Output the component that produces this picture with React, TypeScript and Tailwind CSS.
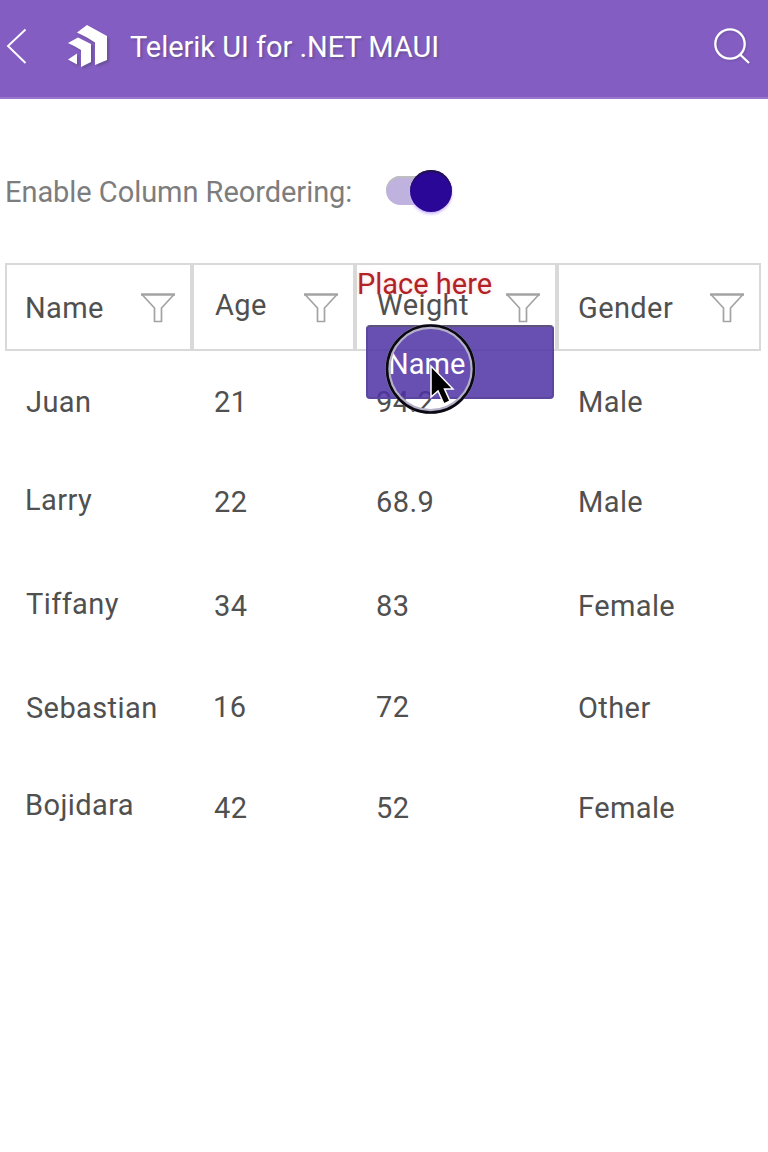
import React from "react";

function Funnel() {
  return (
    <svg className="mt-[27px] h-[34px] w-[38px] shrink-0" viewBox="0 0 38 34" fill="none" stroke="#a3a3a3" strokeWidth="1.7">
      <path d="M3 2.500L15.500 16V29.500H22.500V16L35 2.500" />
      <path d="M2 2.500H36" strokeWidth="2.400" />
    </svg>
  );
}

function Head({ box, text, children }: { box: string; text: string; children: string }) {
  return (
    <div className={`box-border flex h-[88px] justify-between border-2 border-[#d9d9d9] tracking-[0.4px] ${box}`}>
      <span className={`whitespace-nowrap ${text}`}>{children}</span>
      <Funnel />
    </div>
  );
}

function Cell({ className, children }: { className: string; children: string }) {
  return <div className={`whitespace-nowrap ${className}`}>{children}</div>;
}

export default function App() {
  return (
    <main className="relative h-[1152px] w-[768px] overflow-hidden bg-white font-['Roboto',sans-serif] text-[29px] leading-[40px] text-[#505050]">
      <header className="flex h-[99px] items-start border-b-2 border-[#9a76cf] bg-[#845dc2] text-white">
        <svg className="ml-[4px] mt-[26px] h-[40px] w-[24px]" viewBox="0 0 24 40" fill="none" stroke="white" strokeWidth="1.9">
          <path d="M21.500 3.500L4 20L21.500 37" />
        </svg>
        <svg className="ml-[37px] mt-[22px] h-[48px] w-[46px] drop-shadow-[2px_2px_1px_rgba(80,70,110,0.5)]" viewBox="0 0 46 48" fill="white">
          <path d="M12 10.500L22 3L42 14V38L30 43V20.500L22 15.500Z" />
          <path d="M3 21L13 15.500L26 22V40L16 45V28L10 24.500Z" />
          <path d="M3 37.500L12 31.500V42.500Z" />
        </svg>
        <h1 className="ml-[19px] mt-[27px] text-[29px] leading-[40px] tracking-[-0.04px] [text-shadow:2px_2px_2px_rgba(80,70,110,0.45)]">Telerik UI for .NET MAUI</h1>
        <svg className="ml-auto mr-[14px] mt-[26px] h-[42px] w-[42px] drop-shadow-[1px_1px_1px_rgba(80,70,110,0.4)]" viewBox="0 0 42 42" fill="none" stroke="white" strokeWidth="2.3">
          <circle cx="18" cy="18" r="14.700" />
          <path d="M28 28.500L37 37" />
        </svg>
      </header>
      <section className="flex items-start pt-[64px]">
        <span className="ml-[5px] mt-[9px] w-[381px] tracking-[-0.05px] text-[#7d7d7d]">Enable Column Reordering:</span>
        <div className="mt-[13px] flex h-[29px] w-[59px] items-center rounded-full bg-[#bfb2df] shadow-[inset_0_2px_1px_#bebebe]">
          <span className="ml-[24px] h-[42px] w-[42px] shrink-0 rounded-full bg-[#2b0797] shadow-[0_2px_3px_#cbb6ff,inset_0_2px_1px_#211447]" />
        </div>
      </section>
      <section className="mt-[51px] ml-[5px] grid w-[756px] grid-cols-[187px_163px_202px_204px]">
        <Head box="pl-[18px] pr-[13px]" text="pt-[23px]">Name</Head>
        <Head box="pl-[21px] pr-[13px]" text="pt-[20px]">Age</Head>
        <Head box="pl-[20px] pr-[13px]" text="pt-[20px]">Weight</Head>
        <Head box="pl-[19px] pr-[13px]" text="pt-[23px]">Gender</Head>
      </section>
      <section className="ml-[5px] grid w-[756px] grid-cols-[187px_163px_202px_204px] auto-rows-[101px] tracking-[0.4px]">
        <Cell className="pl-[21px] pt-[31px]">Juan</Cell><Cell className="pl-[22px] pt-[31px]">21</Cell><Cell className="pl-[21px] pt-[31px]">94.2</Cell><Cell className="pl-[21px] pt-[31px]">Male</Cell>
        <Cell className="pl-[20px] pt-[28px]">Larry</Cell><Cell className="pl-[22px] pt-[30px]">22</Cell><Cell className="pl-[21px] pt-[30px]">68.9</Cell><Cell className="pl-[21px] pt-[30px]">Male</Cell>
        <Cell className="pl-[21px] pt-[31px]">Tiffany</Cell><Cell className="pl-[22px] pt-[33px]">34</Cell><Cell className="pl-[21px] pt-[33px]">83</Cell><Cell className="pl-[21px] pt-[33px]">Female</Cell>
        <Cell className="pl-[21px] pt-[34px]">Sebastian</Cell><Cell className="pl-[21px] pt-[33px]">16</Cell><Cell className="pl-[21px] pt-[33px]">72</Cell><Cell className="pl-[21px] pt-[34px]">Other</Cell>
        <Cell className="pl-[20px] pt-[30px]">Bojidara</Cell><Cell className="pl-[22px] pt-[33px]">42</Cell><Cell className="pl-[21px] pt-[33px]">52</Cell><Cell className="pl-[21px] pt-[33px]">Female</Cell>
      </section>
      <div className="absolute left-[357px] top-[264px] text-[#b12226] [text-shadow:0_0_4px_rgba(255,160,160,0.45)]">Place here</div>
      <div className="absolute left-[366px] top-[325px] h-[74px] w-[188px] rounded-[4px] border-2 border-t-[#5c5478] border-r-[#5c46a0] border-b-[#5c46a0] border-l-[#5c46a0] bg-[#4c31a5]/85 pl-[20px] pt-[17px] text-white">Name</div>
      <svg className="absolute left-[380px] top-[318px] h-[100px] w-[100px]" viewBox="0 0 100 100">
        <circle cx="50.500" cy="51" r="42.500" fill="none" stroke="#b6b0c8" strokeWidth="5" />
        <circle cx="50.500" cy="51" r="43.500" fill="none" stroke="#0b0912" strokeWidth="2.600" />
        <path d="M51 48V79L58 73L64 86L70 83L64.500 71H73Z" fill="#000" stroke="#fff" strokeWidth="1.500" />
      </svg>
    </main>
  );
}
